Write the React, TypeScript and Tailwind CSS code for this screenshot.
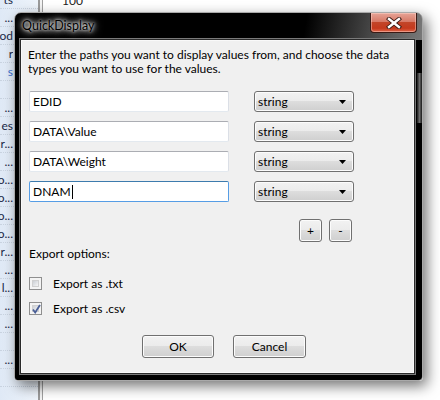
const ui = "font-['Lato','Liberation_Sans',sans-serif]";

const listRows = [
  "ts", "...", "od", "r", "s", "", "...", "es", "r...", "...", "o...", "o...",
  "o...", "o...", "r...", "...", "l...", "...", "...", "", "...", "", "",
];

function Background() {
  return (
    <div className="absolute inset-0 flex bg-white">
      <div className="w-[38px] bg-[linear-gradient(90deg,#dfe9f6,#eef4fb)] flex flex-col -mt-[9px]">
        {listRows.map((t, i) => (
          <div
            key={i}
            className="h-[18px] shrink-0 flex items-center justify-start border-b border-dotted border-[#c9d3e0]"
          >
            <div className="w-[13px] flex justify-end overflow-hidden">
              <span
                className={`whitespace-nowrap text-[12px] ${ui} ${i === 4 ? "text-[#3a6fd0]" : "text-[#1b2a48]"}`}
              >
                {t}
              </span>
            </div>
          </div>
        ))}
      </div>
      <div className="w-[2px] bg-[#9a9a9a]" />
      <div className="w-[2px] bg-[#f4f4f4]" />
      <div className="w-[1px] bg-[#a0a0a0]" />
      <div className="flex-1 relative">
        <span className={`absolute left-[19px] -top-[8px] text-[12px] text-[#222] ${ui}`}>100</span>
      </div>
    </div>
  );
}

function TextBox({ value, focused }: { value: string; focused?: boolean }) {
  return (
    <div
      className={`w-[200px] h-[21px] bg-white rounded-[2px] border flex items-center pl-[3px] ${
        focused
          ? "border-[#569de5] border-t-[#3d7bad]"
          : "border-[#e3e9ef] border-t-[#abadb3] border-l-[#dbdfe6] border-r-[#dbdfe6]"
      }`}
    >
      <span className="text-[12px] text-black leading-none">{value}</span>
      {focused && <span className="w-[1px] h-[14px] bg-black ml-[1px]" />}
    </div>
  );
}

const btnFace =
  "border border-[#707070] rounded-[3px] bg-[linear-gradient(180deg,#f2f2f2_0%,#ebebeb_49%,#dddddd_50%,#cfcfcf_100%)] shadow-[inset_0_0_0_1px_#fcfcfc]";

function Combo() {
  return (
    <div className={`w-[100px] h-[21px] ${btnFace} flex items-center pl-[3px] pr-[7px] justify-between`}>
      <span className="text-[12px] text-black leading-none">string</span>
      <svg width="7" height="4" viewBox="0 0 7 4">
        <path d="M0 0H7L3.5 4Z" fill="#000" />
      </svg>
    </div>
  );
}

function Button({ label, w, h = 23 }: { label: string; w: number; h?: number }) {
  return (
    <div
      className={`${btnFace} flex items-center justify-center text-[12px] text-black`}
      style={{ width: w, height: h }}
    >
      {label}
    </div>
  );
}

function CheckBox({ checked }: { checked?: boolean }) {
  return (
    <div className="w-[13px] h-[13px] border border-[#8f8f8f] bg-[#f4f4f4] p-[2px]">
      <div className="w-full h-full border border-[#d0d0d0] bg-[linear-gradient(135deg,#cbcfd5,#f6f6f6)] relative">
        {checked && (
          <svg className="absolute -left-[1px] -top-[2px]" width="9" height="10" viewBox="0 0 9 10">
            <path d="M1 5.5L3.2 8.5L8 1" stroke="#4a5f97" strokeWidth="1.8" fill="none" />
          </svg>
        )}
      </div>
    </div>
  );
}

function CloseButton() {
  return (
    <div className="absolute left-[355px] top-0 w-[47px] h-[20px] rounded-b-[4px] border border-[#3a1a14] border-t-0 bg-[linear-gradient(180deg,#e7a497_0%,#d77a68_45%,#c24529_50%,#c4391d_80%,#e0664a_100%)] shadow-[inset_0_0_0_1px_rgba(255,220,210,0.45)] flex items-center justify-center">
      <svg width="16" height="12" viewBox="0 0 16 12">
        <path d="M3 2L13 10M13 2L3 10" stroke="#3b1a14" strokeWidth="4.2" strokeLinecap="square" />
        <path d="M3 2L13 10M13 2L3 10" stroke="#fff" strokeWidth="2.4" strokeLinecap="square" />
      </svg>
    </div>
  );
}

function Dialog() {
  return (
    <div
      className={`absolute left-[14px] top-[12px] w-[409px] h-[369px] rounded-t-[7px] rounded-b-[4px] border border-[#a9a9a9] bg-[linear-gradient(100deg,#000_0%,#000_62%,#5a5a5a_80%,#8c8c8c_92%,#6a6a6a_100%)] shadow-[4px_5px_14px_rgba(0,0,0,0.55)] ${ui}`}
    >
      <div className="absolute inset-x-0 top-[27px] bottom-0 bg-black rounded-b-[4px]" />
      <div className="absolute right-0 top-[60px] w-[5px] h-[50px] bg-[linear-gradient(90deg,#222,#9a9a9a,#222)] opacity-70" />
      <CloseButton />
      <div className="relative flex flex-col h-full">
        <div className="h-[26px] shrink-0 flex items-center pl-[7px]">
          <span className="text-[12.5px] text-black [text-shadow:0_0_6px_#fff,0_0_10px_#fff,0_0_3px_#fff]">
            QuickDisplay
          </span>
        </div>
        <div className="ml-[5px] mr-[7px] mb-[6px] flex-1 border border-[#2a2a2a] shadow-[0_0_0_1px_#7a7a7a]">
          <div className="h-full bg-[#f0f0f0] border border-[#ffffff]/60 flex flex-col pl-[6px]">
            <p className="mt-[7px] text-[12px] leading-[14px] text-black whitespace-nowrap">
              Enter the paths you want to display values from, and choose the data
              <br />
              types you want to use for the values.
            </p>
            <div className="mt-[15px] flex flex-col gap-[9px] pl-[1px]">
              {["EDID", "DATA\\Value", "DATA\\Weight", "DNAM"].map((v, i) => (
                <div key={v} className="flex gap-[25px]">
                  <TextBox value={v} focused={i === 3} />
                  <Combo />
                </div>
              ))}
            </div>
            <div className="mt-[17px] flex gap-[7px] pl-[271px]">
              <Button label="+" w={23} />
              <Button label="-" w={23} />
            </div>
            <div className="mt-[5px] pl-[1px] text-[12px] text-black leading-[14px]">Export options:</div>
            <div className="mt-[16px] pl-[1px] flex items-center gap-[11px]">
              <CheckBox />
              <span className="text-[12px] text-black leading-none">Export as .txt</span>
            </div>
            <div className="mt-[12px] pl-[1px] flex items-center gap-[11px]">
              <CheckBox checked />
              <span className="text-[12px] text-black leading-none">Export as .csv</span>
            </div>
            <div className="mt-[20px] flex gap-[19px] pl-[114px]">
              <Button label="OK" w={72} />
              <Button label="Cancel" w={73} />
            </div>
          </div>
        </div>
      </div>
    </div>
  );
}

export default function App() {
  return (
    <div className="relative w-[440px] h-[400px] overflow-hidden">
      <Background />
      <Dialog />
    </div>
  );
}
